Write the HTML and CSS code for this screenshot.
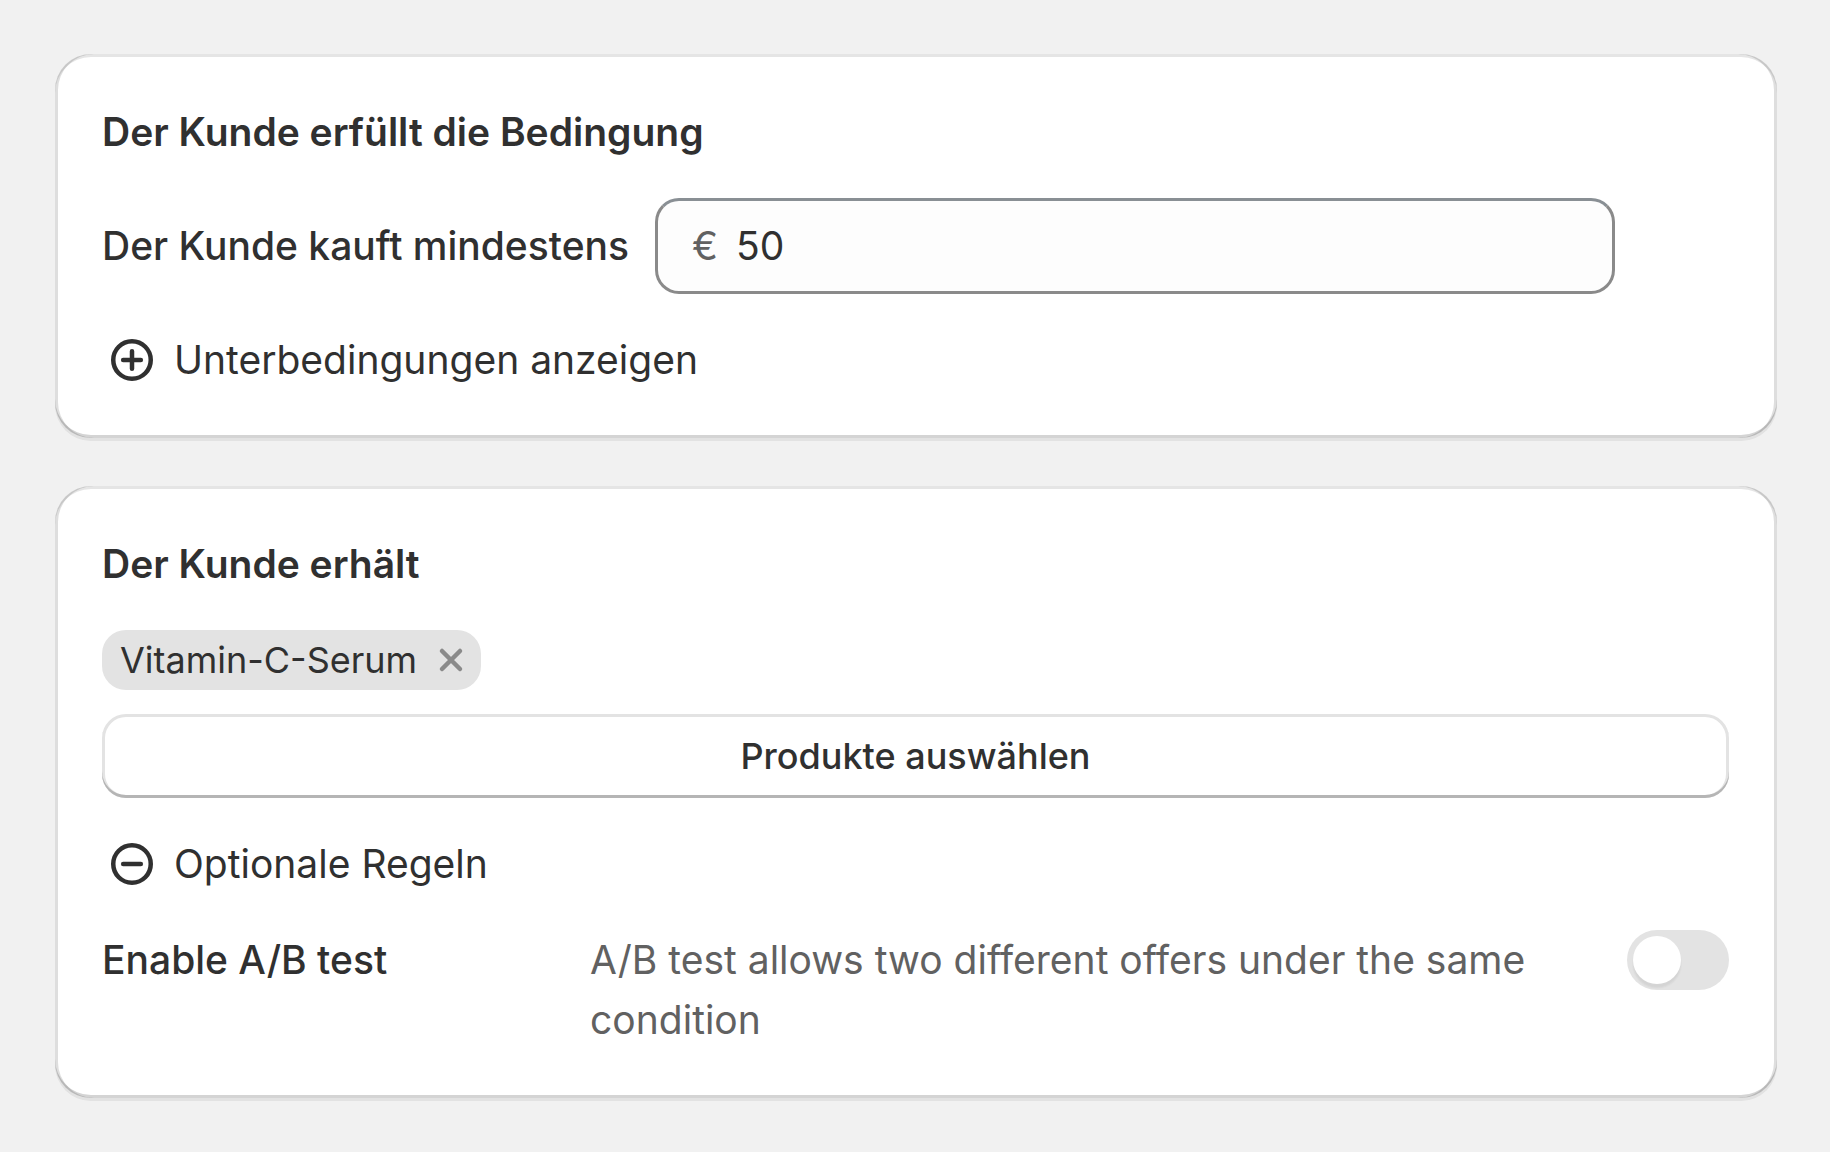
FILE: index.html
```html
<!DOCTYPE html>
<html lang="de">
<head>
  <meta charset="UTF-8">
  <title>Angebot</title>
  <link rel="stylesheet" href="styles.css">
</head>
<body>

  <section class="card">
    <h2>Der Kunde erfüllt die Bedingung</h2>

    <div class="condition">
      <label for="amount">Der Kunde kauft mindestens</label>
      <div class="field">
        <span class="prefix">€</span>
        <input type="text" id="amount" value="50" inputmode="decimal">
      </div>
    </div>

    <button type="button" class="disclosure">
      <svg viewBox="0 0 20 20" aria-hidden="true">
        <circle cx="10" cy="10" r="6.25"/>
        <path d="M7.05 10h5.9M10 7.05v5.9"/>
      </svg>
      Unterbedingungen anzeigen
    </button>
  </section>

  <section class="card">
    <h2>Der Kunde erhält</h2>

    <div class="products">
      <span class="tag">
        Vitamin-C-Serum
        <button type="button" class="tag-remove" aria-label="Vitamin-C-Serum entfernen">
          <svg viewBox="0 0 20 20" aria-hidden="true">
            <path d="M7 7l6 6M13 7l-6 6"/>
          </svg>
        </button>
      </span>
      <button type="button" class="select-products">Produkte auswählen</button>
    </div>

    <button type="button" class="disclosure">
      <svg viewBox="0 0 20 20" aria-hidden="true">
        <circle cx="10" cy="10" r="6.25"/>
        <path d="M7.05 10h5.9"/>
      </svg>
      Optionale Regeln
    </button>

    <div class="setting">
      <label for="abtest">Enable A/B test</label>
      <p>A/B test allows two different offers under the same condition</p>
      <input type="checkbox" id="abtest" class="switch">
    </div>
  </section>

</body>
</html>
```
FILE: styles.css
```css
* {
  box-sizing: border-box;
}
body {
  margin: 0;
  padding: 54px 53px 54px 55px;
  display: flex;
  flex-direction: column;
  gap: 48px;
  background-color: #f1f1f1;
  color: #303030;
  font-family: Inter, "Liberation Sans", sans-serif;
  font-size: 39px;
  line-height: 60px;
}
h2, p {
  margin: 0;
}
h2 {
  font-size: 39px;
  font-weight: 600;
}
label {
  font-weight: 500;
}
button, input {
  margin: 0;
  font: inherit;
  color: inherit;
}
button {
  padding: 0;
  border: none;
  background: none;
  cursor: pointer;
}
svg {
  display: block;
  width: 60px;
  height: 60px;
  fill: none;
  stroke: currentColor;
  stroke-width: 1.5;
  stroke-linecap: round;
}

.card {
  display: flex;
  flex-direction: column;
  align-items: stretch;
  gap: 36px;
  padding: 48px 48px 48px 47px;
  border-radius: 36px;
  background-color: #fff;
  box-shadow:
    inset 3px 0 0 rgba(0, 0, 0, 0.13),
    inset -3px 0 0 rgba(0, 0, 0, 0.13),
    inset 0 -3px 0 rgba(0, 0, 0, 0.17),
    inset 0 3px 0 rgba(204, 204, 204, 0.5),
    0 3px 0 rgba(26, 26, 26, 0.07);
}

/* amount */
.condition {
  display: flex;
  align-items: center;
  gap: 26px;
  padding-right: 114px;
}
.field {
  flex: 1;
  display: flex;
  align-items: center;
  gap: 18px;
  height: 96px;
  padding: 0 34px;
  border: 3px solid #8a8a8a;
  border-top-color: #898f94;
  border-radius: 24px;
  background-color: #fdfdfd;
}
.prefix {
  color: #616161;
}
.field input {
  flex: 1;
  min-width: 0;
  padding: 0;
  border: none;
  outline: none;
  background: none;
}

.disclosure {
  display: flex;
  align-items: center;
  align-self: flex-start;
  gap: 12px;
}

/* products */
.products {
  display: flex;
  flex-direction: column;
  gap: 24px;
}
.tag {
  display: flex;
  align-items: center;
  align-self: flex-start;
  padding-left: 18px;
  border-radius: 24px;
  background-color: #e3e3e3;
  font-size: 36px;
}
.tag-remove {
  margin-left: 4px;
  color: #8a8a8a;
}
.select-products {
  height: 84px;
  border-radius: 24px;
  background-color: #fff;
  font-size: 36px;
  font-weight: 500;
  box-shadow:
    inset 0 -3px 0 #b5b5b5,
    inset 0 0 0 3px #e3e3e3;
}

/* A/B test */
.setting {
  display: flex;
  align-items: flex-start;
}
.setting label {
  width: 30%;
}
.setting p {
  flex: 1;
  padding-right: 60px;
  color: #616161;
}
.switch {
  appearance: none;
  width: 102px;
  height: 60px;
  padding: 6px;
  border-radius: 30px;
  background-color: #e3e3e3;
  cursor: pointer;
}
.switch::before {
  content: "";
  display: block;
  width: 48px;
  height: 48px;
  border-radius: 50%;
  background-color: #fff;
  box-shadow: 0 4px 2px rgba(26, 26, 26, 0.07);
}
.switch:checked {
  background-color: #303030;
}
.switch:checked::before {
  margin-left: 42px;
}
```
